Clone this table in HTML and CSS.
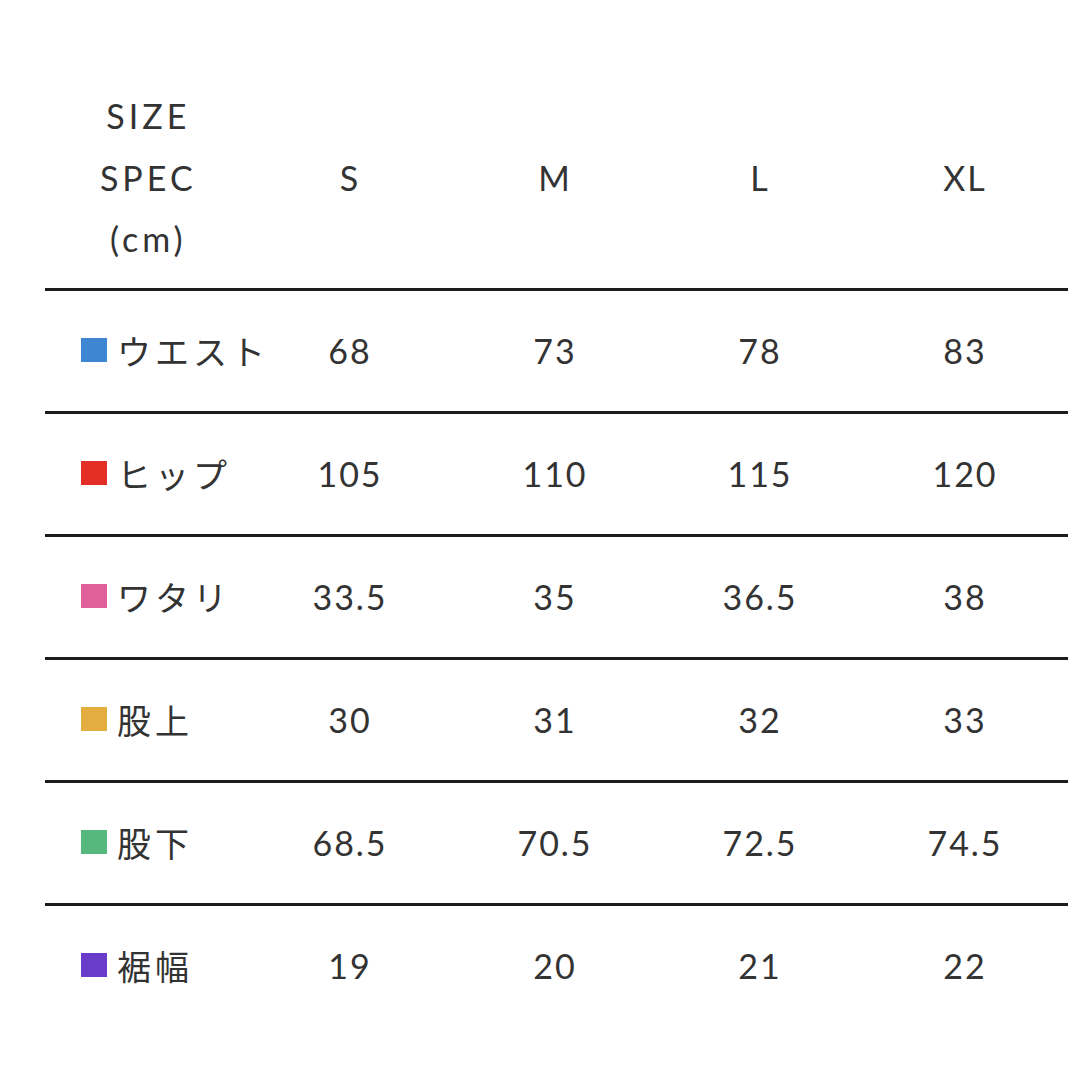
FILE: index.html
```html
<!DOCTYPE html>
<html lang="ja">
<head>
<meta charset="utf-8">
<link rel="stylesheet" href="styles.css">
</head>
<body>
<div class="sheet">
  <div class="row head">
    <div class="cell label-head">SIZE<br>SPEC<br>(cm)</div>
    <div class="cell">S</div>
    <div class="cell">M</div>
    <div class="cell">L</div>
    <div class="cell">XL</div>
  </div>
  <div class="row">
    <div class="cell label"><span class="sq blue"></span>ウエスト</div>
    <div class="cell">68</div><div class="cell">73</div><div class="cell">78</div><div class="cell">83</div>
  </div>
  <div class="row">
    <div class="cell label"><span class="sq red"></span>ヒップ</div>
    <div class="cell">105</div><div class="cell">110</div><div class="cell">115</div><div class="cell">120</div>
  </div>
  <div class="row">
    <div class="cell label"><span class="sq pink"></span>ワタリ</div>
    <div class="cell">33.5</div><div class="cell">35</div><div class="cell">36.5</div><div class="cell">38</div>
  </div>
  <div class="row">
    <div class="cell label"><span class="sq gold"></span>股上</div>
    <div class="cell">30</div><div class="cell">31</div><div class="cell">32</div><div class="cell">33</div>
  </div>
  <div class="row">
    <div class="cell label"><span class="sq green"></span>股下</div>
    <div class="cell">68.5</div><div class="cell">70.5</div><div class="cell">72.5</div><div class="cell">74.5</div>
  </div>
  <div class="row">
    <div class="cell label"><span class="sq purple"></span>裾幅</div>
    <div class="cell">19</div><div class="cell">20</div><div class="cell">21</div><div class="cell">22</div>
  </div>
</div>
</body>
</html>
```
FILE: styles.css
```css
html, body {
  margin: 0;
  padding: 0;
  background: #ffffff;
}
body {
  width: 1080px;
  height: 1080px;
  overflow: hidden;
  font-family: Lato, "Noto Sans CJK JP", sans-serif;
  color: #333333;
}
.sheet {
  margin-left: 45px;
  width: 1023px;
  padding-top: 85px;
}
.row {
  display: grid;
  grid-template-columns: 202.5px 205px 205px 205px 205px;
  align-items: center;
  height: 120px;
  border-top: 3px solid #1c1c1c;
  font-size: 34px;
  letter-spacing: 2px;
}
.row.head {
  border-top: none;
  height: 203px;
  align-items: start;
}
.row.head .cell {
  line-height: 61.5px;
  padding-top: 61.5px;
}
.row.head .label-head {
  padding-top: 0;
  letter-spacing: 4px;
  padding-left: 4px;
}
.cell {
  text-align: center;
  white-space: nowrap;
  padding-bottom: 2px;
}
.label {
  display: flex;
  align-items: center;
  text-align: left;
  padding-left: 36px;
  font-family: "Noto Sans CJK JP", sans-serif;
  font-size: 34px;
  letter-spacing: 4px;
}
.sq {
  display: inline-block;
  width: 26px;
  height: 24px;
  margin-right: 10px;
  flex: none;
}
.blue { background: #3f86d2; }
.red { background: #e22e24; }
.pink { background: #e0619a; }
.gold { background: #e3ad3f; }
.green { background: #56b87d; }
.purple { background: #6b3cc9; }
```
